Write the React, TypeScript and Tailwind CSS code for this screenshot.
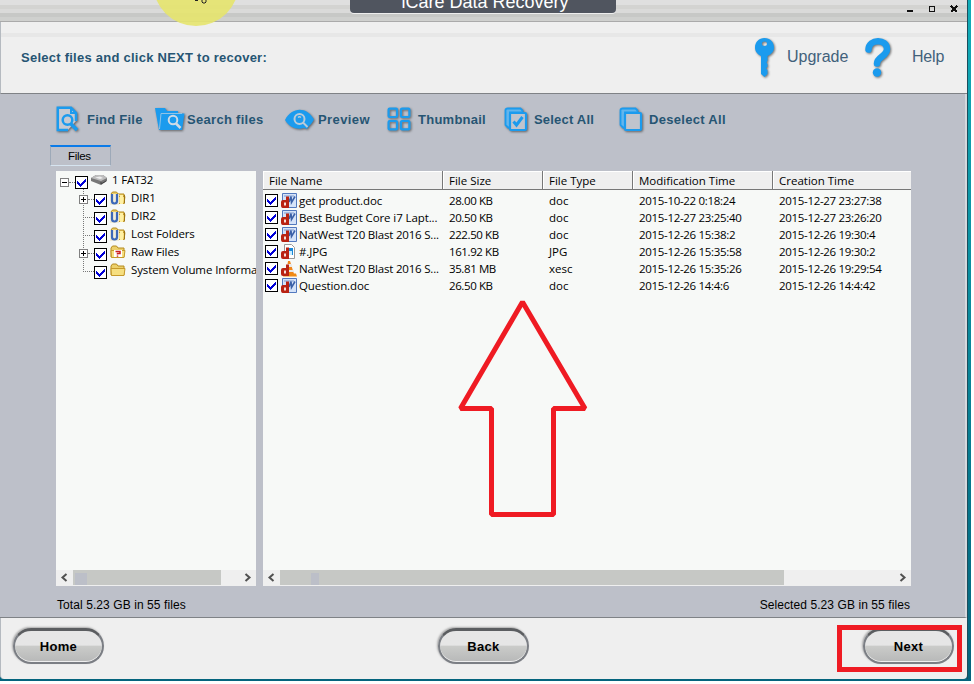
import React from "react";

const files = [
  { name: "get product.doc", size: "28.00 KB", type: "doc", modified: "2015-10-22 0:18:24", created: "2015-12-27 23:27:38" },
  { name: "Best Budget Core i7 Lapt...", size: "20.50 KB", type: "doc", modified: "2015-12-27 23:25:40", created: "2015-12-27 23:26:20" },
  { name: "NatWest T20 Blast 2016 S...", size: "222.50 KB", type: "doc", modified: "2015-12-26 15:38:2", created: "2015-12-26 19:30:4" },
  { name: "#.JPG", size: "161.92 KB", type: "JPG", modified: "2015-12-26 15:35:58", created: "2015-12-26 19:30:2" },
  { name: "NatWest T20 Blast 2016 S...", size: "35.81 MB", type: "xesc", modified: "2015-12-26 15:35:26", created: "2015-12-26 19:29:54" },
  { name: "Question.doc", size: "26.50 KB", type: "doc", modified: "2015-12-26 14:4:6", created: "2015-12-26 14:4:42" },
];

const folders = [
  { name: "DIR1", icon: "deleted", expandable: true },
  { name: "DIR2", icon: "deleted", expandable: false },
  { name: "Lost Folders", icon: "deleted", expandable: false },
  { name: "Raw Files", icon: "raw", expandable: true },
  { name: "System Volume Informa", icon: "folder", expandable: false },
];

const SHADOW = "[filter:drop-shadow(1px_1px_1px_rgba(60,60,60,0.7))]";

const KeyIcon = () => (
  <svg width="22" height="42" viewBox="0 0 22 42" className={SHADOW}>
    <path
      fillRule="evenodd"
      fill="#1b9bee"
      d="M10.500 1C5 1 1 5 1 10.500c0 4 2.300 6.500 6 8.500v18l3.500 3 3-3v-4l-1.500-1.500 1.500-2v-2.500l-1-1.500 1-2v-4.500c4-2 6.500-4.500 6.500-8.500C20 5 16 1 10.500 1zm0 3.500a2.600 2.200 0 1 1 0 4.400 2.600 2.200 0 0 1 0-4.400z"
    />
  </svg>
);

const QuestionIcon = () => (
  <svg width="28" height="42" viewBox="0 0 28 42" className={SHADOW}>
    <path
      d="M4.500 12.500C5 1.500 23 1.500 23 12c0 7.500-10 7.500-10 14.500"
      fill="none"
      stroke="#1b9bee"
      strokeWidth="6.500"
      strokeLinecap="round"
    />
    <circle cx="13" cy="35.500" r="4.200" fill="#1b9bee" />
  </svg>
);

const FindFileIcon = () => (
  <svg width="25" height="27" viewBox="0 0 25 27" fill="none" stroke="#1b9bee" strokeWidth="2.500" className={SHADOW}>
    <path d="M12 24H1.800V1.800H15l5 5.200v8" fill="#c6cad2" />
    <path d="M15 1.500V7h5.500" strokeWidth="2" />
    <circle cx="11.500" cy="14" r="4.800" />
    <path d="M15 18l6 6" strokeWidth="3.500" />
  </svg>
);

const SearchFolderIcon = () => (
  <svg width="30" height="25" viewBox="0 0 30 25" className={SHADOW}>
    <path d="M0 1h10l2 3h11v2.500h6.500L27 23H4z" fill="#1b9bee" />
    <path d="M4.500 22L6 6.500h21" fill="none" stroke="#8fc3e6" strokeWidth="1" />
    <circle cx="18" cy="13" r="4.300" fill="none" stroke="#cfdbe6" strokeWidth="2" />
    <path d="M21 16.500l4.500 4.500" stroke="#cfdbe6" strokeWidth="2.500" />
  </svg>
);

const EyeIcon = () => (
  <svg width="30" height="22" viewBox="0 0 30 22" className={SHADOW}>
    <path d="M0 11C7-2.500 22-2.500 29 10.500c-1.500 3-3 5-5 6.500l-2 3-3-1C12 21 5 19 0 11z" fill="#1b9bee" />
    <circle cx="14.500" cy="10" r="5" fill="#1b9bee" stroke="#b9cbd9" strokeWidth="2" />
    <path d="M13 8.500q1.500-1.500 3 0" fill="none" stroke="#b9cbd9" strokeWidth="1.200" />
    <path d="M18 13.500l4.500 4.500" stroke="#b9cbd9" strokeWidth="2" />
  </svg>
);

const ThumbnailIcon = () => (
  <svg width="26" height="26" viewBox="0 0 26 26" fill="none" stroke="#1b9bee" strokeWidth="2.200" className={SHADOW}>
    <rect x="1.600" y="1.600" width="8.400" height="8.400" rx="1" />
    <rect x="14" y="1.600" width="8.400" height="8.400" rx="1" />
    <rect x="1.600" y="14" width="8.400" height="8.400" rx="1" />
    <rect x="14" y="14" width="8.400" height="8.400" rx="1" />
  </svg>
);

const StackIcon = ({ checked }: { checked?: boolean }) => (
  <svg width="25" height="26" viewBox="0 0 25 26" fill="none" stroke="#1b9bee" className={SHADOW}>
    <path d="M1.500 18V3q0-1.500 2-1.500h13l2 2v2H6v15H4z" fill="#63b5ec" strokeWidth="1.800" />
    <rect x="6" y="6" width="16" height="17" rx="1" fill="#bfc4cd" strokeWidth="2.200" />
    {checked && <path d="M9.500 14.500l3 3.500 6-8" strokeWidth="3" />}
  </svg>
);

const tools = [
  { label: "Find File", icon: <FindFileIcon />, box: "w-[99px]", iconBox: "w-[31px]", text: "tracking-[0.25px]" },
  { label: "Search files", icon: <SearchFolderIcon />, box: "w-[130px]", iconBox: "w-[32px]", text: "tracking-[0.3px]" },
  { label: "Preview", icon: <EyeIcon />, box: "w-[102px]", iconBox: "w-[33px]", text: "tracking-[0.4px]" },
  { label: "Thumbnail", icon: <ThumbnailIcon />, box: "w-[117px]", iconBox: "w-[31px]", text: "tracking-[0.25px]" },
  { label: "Select All", icon: <StackIcon checked />, box: "w-[115px]", iconBox: "w-[30px]", text: "tracking-[0.2px]" },
  { label: "Deselect All", icon: <StackIcon />, box: "w-[120px]", iconBox: "w-[30px]", text: "tracking-[0.3px]" },
];

const Checkbox = () => (
  <svg width="13" height="13" viewBox="0 0 13 13" className="block shrink-0" shapeRendering="crispEdges">
    <rect x="0.500" y="0.500" width="12" height="12" fill="#fff" stroke="#000" />
    <path d="M2 5v3l3 3 6-6V2L5 8z" fill="#0000d8" />
  </svg>
);

const Expander = ({ open }: { open?: boolean }) => (
  <svg width="9" height="9" viewBox="0 0 9 9" className="block shrink-0" shapeRendering="crispEdges">
    <rect x="0.500" y="0.500" width="8" height="8" fill="#fff" stroke="#808080" />
    <path d={open ? "M2 4.500h5" : "M2 4.500h5M4.500 2v5"} stroke="#000" />
  </svg>
);

const DriveIcon = () => (
  <svg width="16" height="12" viewBox="0 0 16 12" className="block shrink-0">
    <path d="M0 4l5-3h7l4 3v3l-6 4-10-4z" fill="#777" />
    <path d="M0 4l5-3h7l4 3-6 3z" fill="#bdbdbd" />
    <path d="M4 3.500l5-1 3 1.500-3 1z" fill="#eee" />
    <path d="M10 8v2l5-3" stroke="#444" fill="none" />
  </svg>
);

const FolderIcon = ({ kind }: { kind: string }) => (
  <svg width="16" height="14" viewBox="0 0 16 14" className="block shrink-0">
    <path d="M1 12V3l1.500-2h4L8 3h6v9z" fill="#ecd06a" stroke="#b58a1c" />
    <path d="M1.500 12.500l-.5-7h14l-1 7z" fill="#f6df80" stroke="#c69a2b" />
    {kind === "deleted" && (
      <>
        <path d="M0 3h9v11H0z" fill="#f1edd8" />
        <path d="M2 3v7q0 2.500 2.500 2.500T7 10V3" fill="none" stroke="#3c68b8" strokeWidth="2.200" />
        <path d="M10 4h3v9h-3z" fill="#fff0a4" />
        <path d="M14.500 4v8.500" stroke="#9d7415" />
      </>
    )}
    {kind === "raw" && (
      <>
        <path d="M4 5h8v7H4z" fill="#fff" />
        <path d="M5.500 6.500h4.500v2H7.500v1M7.500 10.500v1.300" fill="none" stroke="#c22" strokeWidth="1.500" />
      </>
    )}
  </svg>
);

const FileIcon = ({ type }: { type: string }) => (
  <svg width="16" height="16" viewBox="0 0 16 16" className="block shrink-0">
    {type === "doc" && (
      <>
        <path d="M1.500.5h14v14h-14z" fill="#d5e3f8" stroke="#5279be" />
        <path d="M3 3h10" stroke="#7c9bd0" />
        <path d="M8 9l2-5.500.5 6L14 3.500" fill="none" stroke="#3b61a8" strokeWidth="1.600" />
      </>
    )}
    {type === "JPG" && (
      <>
        <path d="M3.500.5h7l3 3v11h-10z" fill="#fff" stroke="#999" />
        <path d="M6 4h6v7H6z" fill="#1989d8" />
        <path d="M8 7h3v4H8z" fill="#c9edff" />
      </>
    )}
    {type === "xesc" && (
      <>
        <path d="M7 0h2l4 13H5z" fill="#f08518" />
        <path d="M6.500 3h4l1 3H6zM5.500 9h7l.5 2H5z" fill="#e8e8e8" />
        <path d="M3 12.500h12l1 3H2z" fill="#ef8a12" />
      </>
    )}
    <path d="M5 3.500h3V15H2q-2 0-2-2V9q0-2 2-2h3z" fill="#b92312" />
    <path d="M3 9.500h2v3H3z" fill="#f6dfda" />
  </svg>
);

const Chevron = ({ right }: { right?: boolean }) => (
  <svg width="17" height="16" viewBox="0 0 17 16" className="shrink-0" fill="none" stroke="#505050" strokeWidth="2">
    <path d={right ? "M6.500 4l4 3.500-4 3.500" : "M10.500 4l-4 3.500 4 3.500"} />
  </svg>
);

const PillButton = ({ label }: { label: string }) => (
  <button className="h-9 w-[91px] rounded-full border-2 border-t-[3px] border-[#7b7e84] border-t-[#5b5d60] bg-linear-to-b from-[#e6e6e6] from-45% via-[#cacbc9] via-50% to-[#b7b8b8] text-[13px] font-bold tracking-[0.3px] text-black shadow-[inset_0_-1px_0_#eee,-1px_-1px_2px_#aaa]">
    {label}
  </button>
);

const HeaderCell = ({ label, width }: { label: string; width: string }) => (
  <div
    className={`${width} h-full shrink-0 border-r border-[#777] pl-1.5 leading-[19px] shadow-[inset_1px_1px_0_#fff]`}
  >
    {label}
  </div>
);

const TreePanel = () => (
  <div className="flex h-[415px] w-[200px] flex-col overflow-hidden bg-[#f7f9f7]">
    <div className="relative flex-1 whitespace-nowrap">
      <div className="absolute top-[17px] left-[27px] h-[84px] border-l border-dotted border-[#777]" />
      <div className="relative flex h-[18px] items-center pl-1">
        <span className="mt-1"><Expander open /></span>
        <span className="mt-1 w-1.5 border-t border-dotted border-[#777]" />
        <span className="mt-1"><Checkbox /></span>
        <span className="ml-[3px]"><DriveIcon /></span>
        <span className="mb-px ml-[5px] tracking-[-0.15px]">1 FAT32</span>
      </div>
      {folders.map((folder) => (
        <div key={folder.name} className="relative flex h-[18px] items-center pl-[23px]">
          <span className="mt-[3px] flex w-[15px] shrink-0 items-center">
            {folder.expandable ? <Expander /> : <span className="w-1" />}
            <span className="flex-1 border-t border-dotted border-[#777]" />
          </span>
          <span className="mt-[5px] shrink-0"><Checkbox /></span>
          <span className="ml-[3px] shrink-0"><FolderIcon kind={folder.icon} /></span>
          <span className="mb-px ml-[5px] tracking-[-0.1px]">{folder.name}</span>
        </div>
      ))}
    </div>
    <div className="flex h-4 bg-[#efefef]">
      <Chevron />
      <div className="h-[15px] w-[148px] bg-[#c6c8c5]">
        <div className="mt-[3px] ml-0.5 h-3 w-3 bg-[#bcbfc8]" />
      </div>
      <span className="flex-1" />
      <Chevron right />
    </div>
  </div>
);

const FileList = () => (
  <div className="relative flex h-[415px] w-[648px] flex-col overflow-hidden bg-[#f7f9f7] whitespace-nowrap">
    <div className="flex h-[19px] shrink-0 border-b border-[#777] bg-[#efefef]">
      <HeaderCell label="File Name" width="w-[180px]" />
      <HeaderCell label="File Size" width="w-[100px]" />
      <HeaderCell label="File Type" width="w-[90px]" />
      <HeaderCell label="Modification Time" width="w-[140px]" />
      <HeaderCell label="Creation Time" width="w-[139px]" />
    </div>
    <div className="flex-1 pt-0.5">
      {files.map((file, i) => (
        <div key={i} className="flex h-[17px] items-center">
          <div className="flex w-[186px] items-center pl-0.5">
            <Checkbox />
            <span className="ml-[3px]"><FileIcon type={file.type} /></span>
            <span className={file.name.endsWith("S...") ? "ml-0.5 tracking-[-0.2px]" : "ml-0.5 tracking-[-0.1px]"}>
              {file.name}
            </span>
          </div>
          <span className="w-[100px] tracking-[-0.4px]">{file.size}</span>
          <span className="w-[90px]">{file.type}</span>
          <span className="w-[140px] tracking-[-0.32px]">{file.modified}</span>
          <span className="tracking-[-0.32px]">{file.created}</span>
        </div>
      ))}
    </div>
    <div className="flex h-4 bg-[#efefef]">
      <Chevron />
      <div className="h-[15px] w-[504px] bg-[#c6c8c5]">
        <div className="mt-[3px] ml-[31px] h-3 w-2 bg-[#bcbfc8]" />
      </div>
      <span className="flex-1" />
      <Chevron right />
    </div>
    {/* arrow pointing at the file list */}
    <svg className="absolute top-[127px] left-[194px]" width="132" height="222" viewBox="0 0 132 222">
      <path
        d="M65.500 4L128 110.500H96.500V216.500H34.500V110.500H3.500z"
        fill="none"
        stroke="#ef1b23"
        strokeWidth="5"
        strokeLinejoin="bevel"
      />
    </svg>
  </div>
);

const TitleBar = () => (
  <div className="relative flex h-[22px] shrink-0 justify-center overflow-hidden border-b border-[#aaa] bg-[linear-gradient(#dfdfdf_0_5px,#d3d3d1_5px_9px,#dadad9_9px_13px,#c7c8c6_13px_17px,#cfd0ce_17px)]">
    <div className="mr-[1px] flex h-[13px] w-[266px] items-end justify-center rounded-b-[4px] bg-[#50555f] pl-1 shadow-[0_1px_0_#eee]">
      <span className="text-[18px] leading-[22px] whitespace-nowrap text-white">iCare Data Recovery</span>
    </div>
    <svg className="absolute top-[5px] right-[7px]" width="54" height="8" viewBox="0 0 54 8" shapeRendering="crispEdges">
      <path d="M1 6h6" stroke="#111" strokeWidth="2" />
      <rect x="23.500" y="1.500" width="5" height="5" fill="none" stroke="#111" />
      <path d="M45 1l6 6M51 1l-6 6" stroke="#111" strokeWidth="2" />
    </svg>
  </div>
);

const App: React.FC = () => {
  return (
    <div className="h-[684px] w-[974px] overflow-hidden bg-white font-['Liberation_Sans',Arial,sans-serif]">
      <div className="relative h-[681px] w-[971px] overflow-hidden bg-linear-to-b from-[#12adb9] to-[#04647d]">
        <div className="flex h-[679px] w-[968px] flex-col border-r border-[#1c4d5c]">
          <TitleBar />

          <div className="flex h-[72px] shrink-0 items-center border-b border-l border-[#7f8286] border-l-[#b5bac0] bg-[linear-gradient(#efefef_0_11px,#e7e7e7_11px_15px,#efefef_15px)] pl-5 text-[#265573]">
            <span className="w-[733px] text-[13px] font-bold tracking-[0.25px]">
              Select files and click NEXT to recover:
            </span>
            <span className="w-[33px]"><KeyIcon /></span>
            <span className="mb-0.5 w-[77px] text-[16px] text-[#42617b]">Upgrade</span>
            <span className="w-12"><QuestionIcon /></span>
            <span className="mb-0.5 text-[16px] tracking-[-0.2px] text-[#42617b]">Help</span>
          </div>

          <div className="h-[524px] shrink-0 border-r-2 border-b border-[#7f8286] border-r-[#d5d8dc] bg-[#bdc0c9]">
            <div className="flex h-[51px] items-center pl-14">
              {tools.map((tool) => (
                <button key={tool.label} className={`${tool.box} flex shrink-0 items-center`}>
                  <span className={`${tool.iconBox} shrink-0`}>{tool.icon}</span>
                  <span className={`${tool.text} text-[13px] font-bold whitespace-nowrap text-[#265573]`}>
                    {tool.label}
                  </span>
                </button>
              ))}
            </div>
            <div className="ml-[50px] h-[21px] w-[61px] border border-t-2 border-[#9da9b8] border-t-[#0b7be8] border-b-[#d6e4f0] pl-[17px] text-[11.5px] leading-[19px] tracking-[-0.3px] text-black">
              Files
            </div>
            <div className="mt-[5px] flex gap-[7px] pl-14 font-['Open_Sans','Noto_Sans',sans-serif] text-[11.5px] leading-[17px] text-black">
              <TreePanel />
              <FileList />
            </div>
            <div className="flex h-[30px] items-center justify-between pt-[7px] pr-[55px] pl-[57px] text-[12px] tracking-[0.08px] text-black">
              <span>Total 5.23 GB in 55 files</span>
              <span>Selected 5.23 GB in 55 files</span>
            </div>
          </div>

          <div className="flex flex-1 items-start justify-between rounded-b-sm border-l border-[#b5bac0] bg-[#efefef] pt-2.5 pr-[13px] pl-3">
            <PillButton label="Home" />
            <PillButton label="Back" />
            <PillButton label="Next" />
          </div>
        </div>

        {/* pointer highlight */}
        <div className="absolute -top-[60px] left-[153px] h-[86px] w-[86px] rounded-full bg-[#e6e46d]/90" />
        <svg className="absolute top-0 left-[195px]" width="13" height="4" viewBox="0 0 13 4" fill="none" stroke="#222">
          <path d="M0 .5h3M7 0v2l1 1h2l1-1V0" />
        </svg>
        <div className="absolute top-[625px] left-[837px] h-[47px] w-[125px] border-[5px] border-[#ef1b23]" />
      </div>
    </div>
  );
};

export default App;
